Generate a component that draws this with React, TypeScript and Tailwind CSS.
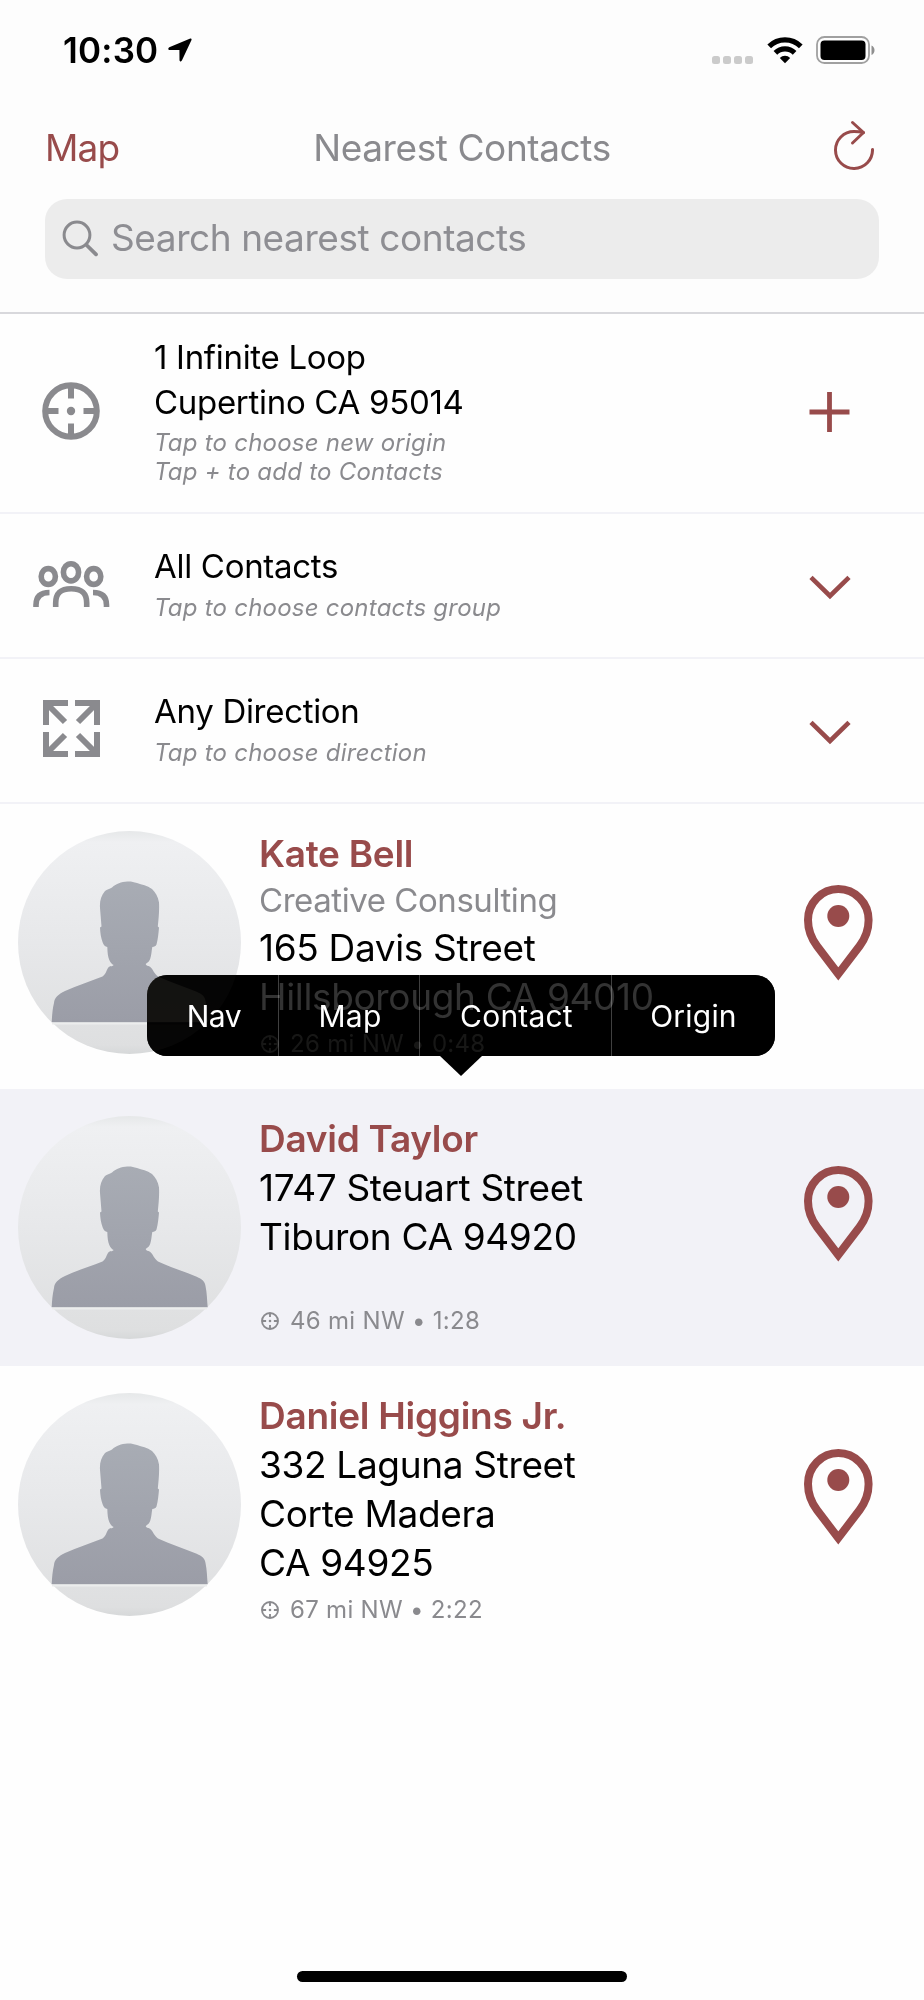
import type { ReactNode } from "react"

interface Contact {
  name: string
  company?: string
  address: string[]
  distance: string
}

const contacts: Contact[] = [
  {
    name: "Kate Bell",
    company: "Creative Consulting",
    address: ["165 Davis Street", "Hillsborough CA 94010"],
    distance: "26 mi NW • 0:48",
  },
  {
    name: "David Taylor",
    address: ["1747 Steuart Street", "Tiburon CA 94920"],
    distance: "46 mi NW • 1:28",
  },
  {
    name: "Daniel Higgins Jr.",
    address: ["332 Laguna Street", "Corte Madera", "CA 94925"],
    distance: "67 mi NW • 2:22",
  },
]

const rowHeights = ["h-[285px]", "h-[277px]", "h-[289px]"]

function CrosshairIcon({ className }: { className: string }) {
  return (
    <svg viewBox="0 0 58 58" className={className} fill="none" stroke="currentColor">
      <circle cx="29" cy="29" r="25.8" strokeWidth="6" />
      <path d="M29 4v12.5M29 41.5V54M4 29h12.5M41.5 29H54" strokeWidth="6" />
      <circle cx="29" cy="29" r="4.2" fill="currentColor" stroke="none" />
    </svg>
  )
}

function PeopleIcon() {
  return (
    <svg
      width="79"
      height="48"
      viewBox="0 0 79 48"
      fill="none"
      stroke="currentColor"
      strokeWidth="5.6"
      className="relative left-px"
    >
      <ellipse cx="39" cy="12.3" rx="7.6" ry="8.6" />
      <ellipse cx="16.3" cy="16.5" rx="7.1" ry="7.9" />
      <ellipse cx="61.7" cy="16.5" rx="7.1" ry="7.9" />
      <path d="M23.7 47v-4c0-10 5-14.3 15.5-14.3S54.7 33 54.7 43v4" />
      <path d="M4 47v-2c0-8.5 4.5-12.5 13.5-12.5" />
      <path d="M74.5 47v-2c0-8.500-4.500-12.500-13.500-12.500" />
    </svg>
  )
}

function ExpandIcon() {
  return (
    <svg
      width="57"
      height="57"
      viewBox="0 0 57 57"
      fill="none"
      stroke="currentColor"
      strokeWidth="6"
      className="relative left-px"
    >
      <path d="M25 3H3V25M32 3H54V25M3 32V54H25M54 32V54H32" />
      <path d="M3.5 3.5 22 22M53.5 3.5 35 22M3.5 53.5 22 35M53.5 53.5 35 35" />
    </svg>
  )
}

function ChevronIcon() {
  return (
    <svg
      width="42"
      height="25"
      viewBox="0 0 42 25"
      fill="none"
      stroke="currentColor"
      strokeWidth="4.6"
      className="mt-[3px]"
    >
      <path d="M2 2.300 21 21 40 2.300" />
    </svg>
  )
}

function PlusIcon() {
  return (
    <svg width="42" height="42" viewBox="0 0 42 42" stroke="currentColor" strokeWidth="4.800" className="mb-[3px]">
      <path d="M20.5 1v40M.5 21h40" />
    </svg>
  )
}

function PinIcon() {
  return (
    <svg width="69" height="96" viewBox="0 0 69 96" fill="none" className="text-[#984b4b]">
      <path
        d="M34.3 89 13 61C7 53 4 45 4 35a30.3 31 0 0 1 60.6 0c0 10-3 18-9 26Z"
        stroke="currentColor"
        strokeWidth="8"
      />
      <circle cx="34.3" cy="31" r="11" fill="currentColor" />
    </svg>
  )
}

function Avatar({ id }: { id: string }) {
  return (
    <svg viewBox="0 0 223 223" className="mt-[27px] size-[223px] shrink-0">
      <defs>
        <linearGradient id={`bg-${id}`} x1="0" y1="0" x2="0" y2="1">
          <stop offset="0" stopColor="#e6e8e9" />
          <stop offset="0.05" stopColor="#eff0f2" />
          <stop offset="0.5" stopColor="#e7e8ea" />
          <stop offset="0.96" stopColor="#dedfe0" />
          <stop offset="1" stopColor="#d6d8d9" />
        </linearGradient>
        <linearGradient id={`body-${id}`} x1="0" y1="0" x2="0" y2="1">
          <stop offset="0" stopColor="#a8acb4" />
          <stop offset="1" stopColor="#9b9da7" />
        </linearGradient>
      </defs>
      <circle cx="111.5" cy="111.5" r="111.5" fill={`url(#bg-${id})`} />
      <path
        d="M109.300 50.500C103 51 98.500 52.500 94 56.500 91.500 58.500 89 58 87 60 83 65 81.500 70 82 77L83.500 95.500 82 96.500C82.200 102 83 107 84.700 111.500 86 114.500 87 115.500 89.300 116 89.500 122 90 126 91.300 129 92.500 131.500 93.500 133 95.700 134 94 136 92 134.500 90.300 136.500 88 140 88 143 84.500 145.500 72 150.500 60 154 47 160 40 163.500 36.500 166.500 36 172 34.500 178 34 185 33.700 191.300H189.700C189 184 189 177 187.500 170 187 165.500 184 163 178.700 160.700 166 155.500 152 151 140 145.500 136 142.500 135 138 132 135.700 130 134.500 128 135 127.700 133 130 131.500 131.500 130 132.300 127.500 133.500 124 133.500 120 134.300 116 136.500 115.500 137.500 115.500 138.500 113.500 140 108 140.500 102 141 96.500L139.800 95.500C140.500 88 141.500 80 141 71.500 140 65.500 137.500 61.500 134 58 129 54.500 124 53.800 119 52 115.500 50.800 112.500 50.200 109.300 50.500Z"
        fill={`url(#body-${id})`}
      />
      <path d="M34 192.500h155" stroke="#eceded" strokeWidth="2" />
    </svg>
  )
}

function StatusBar() {
  return (
    <div className="flex h-[108px] items-start justify-between pt-[30px] pr-12 pl-[63px]">
      <div className="flex items-center gap-[10px]">
        <span className="text-[35px] leading-10 font-semibold tracking-[0.2px]">10:30</span>
        <svg width="24" height="24" viewBox="0 0 24 24">
          <path
            d="M22.300.600 1.300 9.300c-1.600.8-1.200 2.700.4 2.700l9.700.1.100 9.800c0 1.700 1.900 2.100 2.500.4L23.500 2c.3-1-.2-1.700-1.200-1.400Z"
            fill="black"
          />
        </svg>
      </div>
      <div className="flex pt-[6px]">
        <div className="mt-5 flex gap-[3px]">
          <span className="size-2 rounded-[2.5px] bg-[#cbcbcb]" />
          <span className="size-2 rounded-[2.5px] bg-[#cbcbcb]" />
          <span className="size-2 rounded-[2.5px] bg-[#cbcbcb]" />
          <span className="size-2 rounded-[2.5px] bg-[#cbcbcb]" />
        </div>
        <svg width="36" height="28" viewBox="0 0 36 28" className="ml-[14px]">
          <g fill="none" stroke="black" strokeWidth="5.2">
            <path d="M2.200 10.400a22.500 22.500 0 0 1 31.600 0" />
            <path d="M8.400 16.900a13.700 13.700 0 0 1 19.200 0" />
          </g>
          <path d="M18 27.200l-5.200-5.200a7.400 7.400 0 0 1 10.400 0Z" fill="black" />
        </svg>
        <svg width="60" height="28" viewBox="0 0 60 28" className="ml-[13px]">
          <rect x="1" y="1" width="52" height="26" rx="7.5" fill="none" stroke="#a0a0a0" strokeWidth="1.8" />
          <rect x="4.5" y="4.5" width="45" height="19.5" rx="4" fill="black" />
          <path d="M55.500 9.500c4 1.500 4 8 0 9.500Z" fill="#8f8f8f" />
        </svg>
      </div>
    </div>
  )
}

function Header() {
  return (
    <header className="h-[314px] border-b-2 border-[#d8d8dc] bg-[#fdfdfd]">
      <StatusBar />
      <div className="grid h-20 grid-cols-[1fr_auto_1fr] items-center pr-[50px] pl-[45px] text-[37px] leading-[48px] tracking-[-0.4px]">
        <span className="mb-px tracking-[-0.8px] text-[#984b4b]">Map</span>
        <span className="mr-[-5px] mb-px text-[#8a8a8e]">Nearest Contacts</span>
        <svg
          width="40"
          height="50"
          viewBox="0 0 40 50"
          fill="none"
          stroke="#984b4b"
          strokeWidth="3"
          strokeLinecap="round"
          strokeLinejoin="round"
          className="mb-[7px] justify-self-end"
        >
          <path d="M38.500 29.500A18.500 18.500 0 1 1 20 11.500c3 0 6 .2 9.500 1.100" />
          <path d="M18.500 2.500l11 10-11 10.500" />
        </svg>
      </div>
      <div className="mx-[45px] mt-[11px] flex h-20 items-center rounded-[22px] bg-[#ececec] pl-[17px]">
        <svg
          width="37"
          height="37"
          viewBox="0 0 37 37"
          fill="none"
          stroke="#8a8a8e"
          strokeLinecap="round"
          className="mb-[2px]"
        >
          <circle cx="15" cy="15" r="12.900" strokeWidth="3" />
          <path d="M25 25.500l9 8.800" strokeWidth="3.800" />
        </svg>
        <span className="mb-[3px] ml-[12px] text-[37px] leading-[48px] tracking-[-0.43px] text-[#8e8e93]">
          Search nearest contacts
        </span>
      </div>
    </header>
  )
}

interface OptionRowProps {
  icon: ReactNode
  action: ReactNode
  title: string[]
  hints: string[]
}

function OptionRow({ icon, action, title, hints }: OptionRowProps) {
  return (
    <div className="flex items-center border-b-2 border-[#f2f2f7]">
      <div className="mb-[4px] flex w-[154px] justify-center pr-[13px] text-[#8a8a8e]">{icon}</div>
      <div className="mb-[5px] flex-1">
        {title.map((line) => (
          <p key={line} className="text-[33px] leading-[44.7px] tracking-[-0.3px]">
            {line}
          </p>
        ))}
        <div className="mt-[3.5px] text-[24px] leading-[29px] tracking-[0.23px] text-[#8a8a8e] italic">
          {hints.map((line) => (
            <p key={line}>{line}</p>
          ))}
        </div>
      </div>
      <div className="mr-[73px] flex w-[42px] justify-center text-[#984b4b]">{action}</div>
    </div>
  )
}

function ActionMenu() {
  return (
    <div className="absolute top-[-114px] left-[147px] z-10">
      <div className="grid h-[81px] w-[628px] grid-cols-[132px_141px_192px_163px] items-stretch divide-x divide-white/25 overflow-hidden rounded-[20px] bg-black/80 text-[30px] tracking-[0.2px] text-white backdrop-invert">
        <button className="pt-[2px] pl-[3px] tracking-[-0.4px]">Nav</button>
        <button className="pt-[2px] pl-[2px]">Map</button>
        <button className="pt-[2px] pl-[2px]">Contact</button>
        <button className="pt-[2px]">Origin</button>
      </div>
      <svg width="42" height="20" viewBox="0 0 42 20" className="ml-[293px]">
        <path d="M0 0h42L21 20Z" fill="black" />
      </svg>
    </div>
  )
}

export default function App() {
  return (
    <div className="flex h-[2000px] w-[924px] flex-col overflow-hidden bg-[#fefefe] font-['Inter',sans-serif] text-black">
      <Header />
      <div className="grid grid-rows-[200px_145px_145px]">
        <OptionRow
          icon={<CrosshairIcon className="size-[58px]" />}
          action={<PlusIcon />}
          title={["1 Infinite Loop", "Cupertino CA 95014"]}
          hints={["Tap to choose new origin", "Tap + to add to Contacts"]}
        />
        <OptionRow
          icon={<PeopleIcon />}
          action={<ChevronIcon />}
          title={["All Contacts"]}
          hints={["Tap to choose contacts group"]}
        />
        <OptionRow
          icon={<ExpandIcon />}
          action={<ChevronIcon />}
          title={["Any Direction"]}
          hints={["Tap to choose direction"]}
        />
      </div>
      <ul>
        {contacts.map((contact, i) => (
          <li
            key={contact.name}
            className={`relative flex pr-[51px] pl-[18px] ${rowHeights[i]} ${i === 1 ? "bg-[#f2f2f7]" : ""}`}
          >
            <Avatar id={`${i}`} />
            <div className="ml-[18px] flex flex-1 flex-col pt-[24.5px] pb-[29px] text-[37px] leading-[49.25px] tracking-[-0.34px]">
              <p className="font-semibold tracking-[-0.28px] text-[#984b4b]">{contact.name}</p>
              {contact.company && (
                <p className="text-[33px] leading-[44.85px] tracking-[-0.44px] text-[#8a8a8e]">
                  {contact.company}
                </p>
              )}
              {contact.address.map((line) => (
                <p key={line}>{line}</p>
              ))}
              <div className="mt-auto flex items-center gap-[11px] pl-[2px] text-[24px] leading-8 tracking-[0.3px] text-[#8a8a8e]">
                <CrosshairIcon className="size-[18px]" />
                {contact.distance}
              </div>
            </div>
            <div className="mb-7 flex items-center">
              <PinIcon />
            </div>
            {i === 1 && <ActionMenu />}
          </li>
        ))}
      </ul>
      <div className="mx-auto mt-auto mb-[18px] h-[11px] w-[330px] shrink-0 rounded-full bg-black" />
    </div>
  )
}
